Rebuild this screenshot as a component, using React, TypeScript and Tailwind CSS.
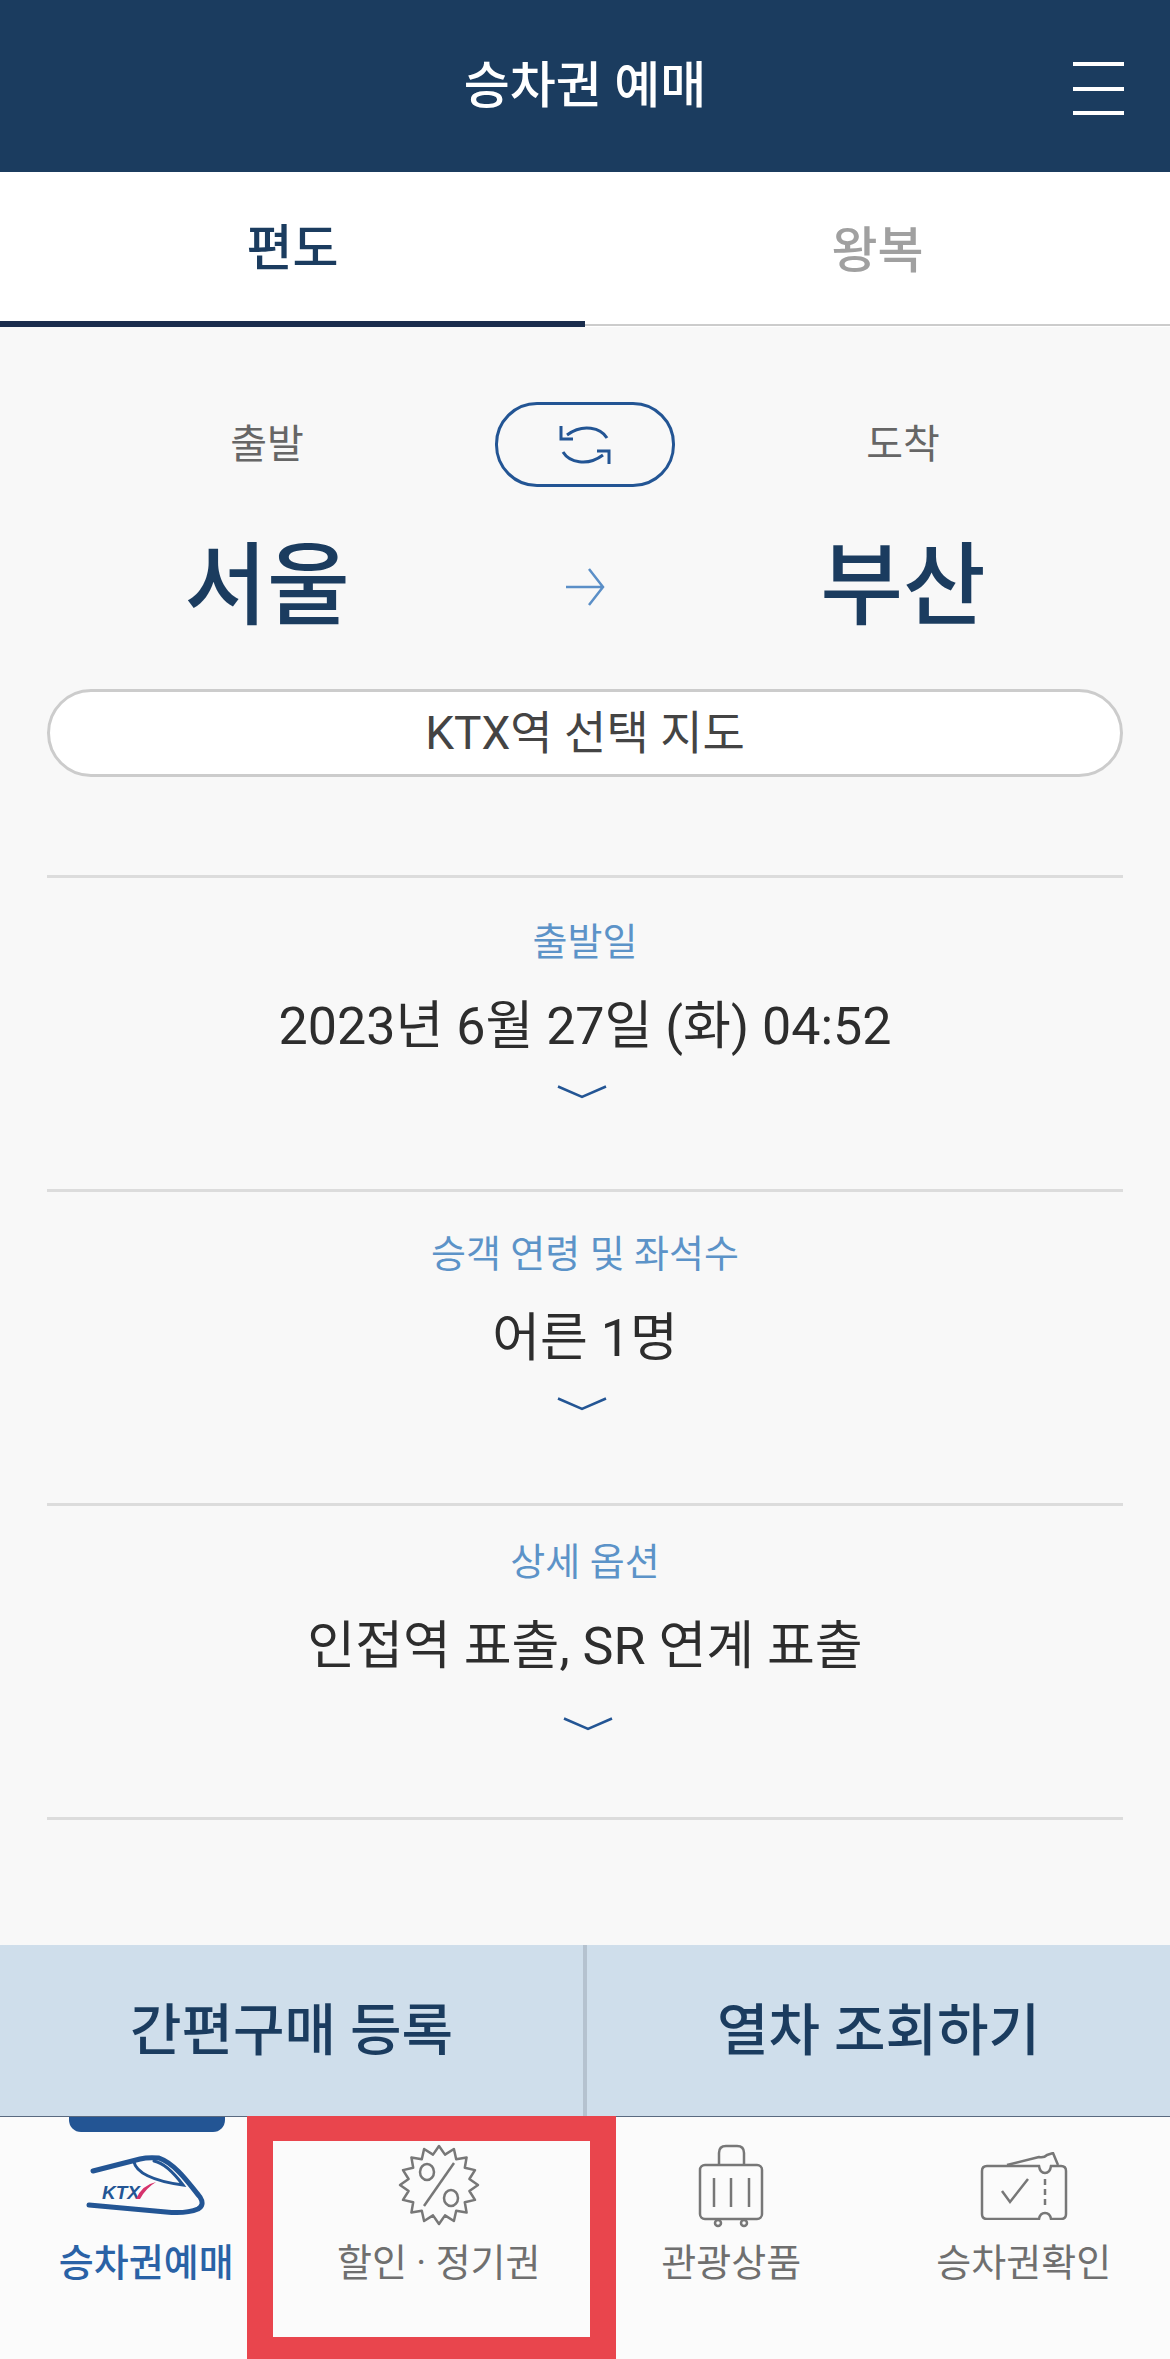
import React from "react";

const badgePoints = Array.from({ length: 32 }, (_, i) => {
  const r = i % 2 === 0 ? 39 : 31;
  const a = (Math.PI * i) / 16 - Math.PI / 2;
  return `${(45 + r * Math.cos(a)).toFixed(1)},${(45 + r * Math.sin(a)).toFixed(1)}`;
}).join(" ");

function Chevron({ className = "" }: { className?: string }) {
  return (
    <svg className={className} width="50" height="14" viewBox="0 0 50 14" fill="none" stroke="#235594" strokeWidth="2.5">
      <path d="M1 1.5 L25 12 L49 1.5" />
    </svg>
  );
}

function Section({
  label,
  value,
  pad,
  chevron,
}: {
  label: string;
  value: string;
  pad: string;
  chevron?: string;
}) {
  return (
    <section className={`h-[314px] border-t-[3px] border-[#dcdcdc] text-center ${pad}`}>
      <p className="text-[38px] leading-[50px] text-[#5c93c8]">{label}</p>
      <p className="mt-[24px] text-[52px] leading-[72px] text-[#2d2d2d]">{value}</p>
      <div className={`mt-[22px] flex justify-center ${chevron ?? "pr-[6px]"}`}>
        <Chevron />
      </div>
    </section>
  );
}

function TrainIcon() {
  return (
    <svg width="120" height="62" viewBox="0 0 120 62" fill="none" className="mt-[15px]">
      <path
        d="M7 16 L54 4 Q62 2 73 3 C90 9 104 30 114 42 Q119 50 112 54 Q100 59 80 57 L3 50"
        stroke="#235594"
        strokeWidth="5"
        strokeLinecap="round"
        strokeLinejoin="round"
      />
      <path d="M48 7 C50 17 66 26 97 30 C88 18 78 8 68 6" stroke="#235594" strokeWidth="3" strokeLinecap="round" />
      <text x="16" y="44" fontFamily="Liberation Sans" fontSize="19" fontWeight="700" fontStyle="italic" fill="#235594">
        KTX
      </text>
      <path d="M50 44 Q56 30 70 27 Q60 33 54 44 Z" fill="#d6336c" />
    </svg>
  );
}

function BadgeIcon() {
  return (
    <svg width="90" height="90" viewBox="0 0 90 90" fill="none" stroke="#777" strokeWidth="2.5">
      <polygon points={badgePoints} strokeLinejoin="round" />
      <ellipse cx="33" cy="32" rx="7" ry="8" />
      <ellipse cx="57" cy="58" rx="7" ry="8" />
      <path d="M60 23 L30 66" />
    </svg>
  );
}

function BagIcon() {
  return (
    <svg width="66" height="86" viewBox="0 0 66 86" fill="none" stroke="#777" strokeWidth="2.5" className="mt-[4px]">
      <rect x="2" y="21" width="62" height="54" rx="5" />
      <path d="M21 21 V9 Q21 2 28 2 H39 Q46 2 46 9 V21" />
      <path d="M16 34 V63 M33 34 V63 M51 34 V63" />
      <circle cx="20" cy="79" r="3" />
      <circle cx="46" cy="79" r="3" />
    </svg>
  );
}

function TicketIcon() {
  return (
    <svg width="90" height="68" viewBox="0 0 90 68" fill="none" stroke="#777" strokeWidth="2.5" className="mt-[12px]">
      <path d="M8 14 H60 Q61 21 66 21 Q71 21 72 14 H82 Q87 14 87 19 V62 Q87 67 82 67 H72 Q71 61 66 61 Q61 61 60 67 H8 Q3 67 3 62 V19 Q3 14 8 14 Z" />
      <path d="M28 13 L60 5 Q65 6 68 3 L74 1 L79 13" strokeLinejoin="round" />
      <path d="M66 27 V55" strokeDasharray="6 4" />
      <path d="M23 39 L31 50 L49 27" />
    </svg>
  );
}

const navItems = [
  { label: "승차권예매", icon: <TrainIcon />, active: true },
  { label: "할인 · 정기권", icon: <BadgeIcon />, active: false },
  { label: "관광상품", icon: <BagIcon />, active: false },
  { label: "승차권확인", icon: <TicketIcon />, active: false },
];

export default function App() {
  return (
    <div className="flex h-[2359px] w-[1170px] flex-col overflow-hidden bg-[#f8f8f8] font-['Roboto','Noto_Sans_CJK_KR',sans-serif]">
      <header className="relative flex h-[172px] items-center justify-center bg-[#1b3c5f]">
        <h1 className="text-[50px] font-medium text-white">승차권 예매</h1>
        <button className="absolute right-[46px] top-[62px] flex h-[53px] w-[51px] flex-col justify-between">
          <span className="h-[4px] w-full bg-white" />
          <span className="h-[4px] w-full bg-white" />
          <span className="h-[4px] w-full bg-white" />
        </button>
      </header>

      <nav className="grid h-[155px] grid-cols-2 bg-white">
        <div className="flex items-center justify-center border-b-[6px] border-[#1a2d4d] pt-[6px] text-[50px] font-medium text-[#1b3c5f]">
          편도
        </div>
        <div className="mb-[1px] flex items-center justify-center border-b-[2px] border-[#cccccc] pt-[6px] text-[50px] font-medium text-[#a0a0a0]">
          왕복
        </div>
      </nav>

      <main className="flex-1">
        <div className="grid grid-cols-[456px_180px_456px] px-[39px] pt-[75px] text-center">
          <p className="self-center text-[40px] text-[#666666]">출발</p>
          <button className="flex h-[85px] items-center justify-center rounded-[42px] border-[3px] border-[#235594]">
            <svg width="52" height="40" viewBox="0 0 52 40" fill="none" stroke="#235594" strokeWidth="3">
              <path d="M48 13 C42 3 24 -2 8 10" />
              <path d="M2 1 V14 H14" />
              <path d="M4 27 C10 37 28 42 44 30" />
              <path d="M50 39 V26 H38" />
            </svg>
          </button>
          <p className="self-center text-[40px] text-[#666666]">도착</p>
        </div>

        <div className="mt-[50px] grid grid-cols-[456px_180px_456px] items-center px-[39px] text-center">
          <p className="text-[90px] font-medium leading-[100px] text-[#1b3c5f]">서울</p>
          <div className="flex justify-center">
            <svg width="40" height="38" viewBox="0 0 40 38" fill="none" stroke="#5b8fc7" strokeWidth="2.5">
              <path d="M1 19 H38 M24 1 L38 19 L24 37" />
            </svg>
          </div>
          <p className="text-[90px] font-medium leading-[100px] text-[#1b3c5f]">부산</p>
        </div>

        <div className="px-[47px]">
          <button className="mt-[52px] flex h-[88px] w-full items-center justify-center rounded-[44px] border-[3px] border-[#cccccc] bg-white text-[46px] text-[#444444]">
            KTX역 선택 지도
          </button>
          <div className="mt-[98px]">
            <Section label="출발일" value="2023년 6월 27일 (화) 04:52" pad="pt-[39px]" />
            <Section label="승객 연령 및 좌석수" value="어른 1명" pad="pt-[37px]" />
            <Section label="상세 옵션" value="인접역 표출, SR 연계 표출" pad="pt-[31px]" chevron="pl-[6px] pt-[12px]" />
            <div className="h-[3px] bg-[#dcdcdc]" />
          </div>
        </div>
      </main>

      <div className="grid h-[171px] grid-cols-2 bg-[#cfdeeb] text-[56px] font-medium text-[#1b3c5f]">
        <div className="flex items-center justify-center border-r-[2px] border-[#b5c2cf]">간편구매 등록</div>
        <div className="flex items-center justify-center border-l-[2px] border-[#b5c2cf]">열차 조회하기</div>
      </div>

      <footer className="relative grid h-[243px] grid-cols-4 border-t-[1px] border-[#5a6a80] bg-[#fbfbfb]">
        {navItems.map((item) => (
          <div key={item.label} className="relative flex flex-col items-center pt-[23px]">
            {item.active && (
              <span className="absolute left-[69px] top-0 h-[15px] w-[156px] rounded-b-[12px] bg-[#235594]" />
            )}
            <div className="flex h-[90px] items-start justify-center">{item.icon}</div>
            <p
              className={`mt-[10px] text-[38px] leading-[46px] ${
                item.active ? "font-medium text-[#2a62a6]" : "text-[#6f6f6f]"
              }`}
            >
              {item.label}
            </p>
          </div>
        ))}
        <div className="absolute left-[247px] top-[-1px] h-[243px] w-[369px] border-x-[26px] border-b-[22px] border-t-[25px] border-[#e9454d]" />
      </footer>
    </div>
  );
}
